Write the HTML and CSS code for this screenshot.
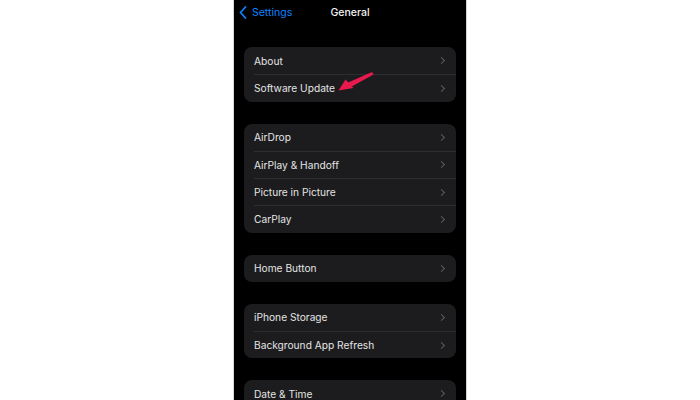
FILE: index.html
```html
<!DOCTYPE html>
<html>
<head>
    <title>General</title>
    <link rel="stylesheet" href="styles.css">
</head>
<body>
    <div class="screen">
        <div class="nav">
            <a class="back">
                <svg width="8" height="13" viewBox="0 0 8 13"><path d="M6.5 1 L1.5 6.5 L6.5 12" fill="none" stroke="#0a84ff" stroke-width="1.8" stroke-linecap="round" stroke-linejoin="round"/></svg>
                <span>Settings</span>
            </a>
            <div class="title">General</div>
            <div></div>
        </div>

        <div class="group">
            <div class="row"><div class="row-body"><span>About</span><i class="chev"></i></div></div>
            <div class="row"><div class="row-body"><span>Software Update</span><i class="chev"></i></div></div>
        </div>

        <div class="group">
            <div class="row"><div class="row-body"><span>AirDrop</span><i class="chev"></i></div></div>
            <div class="row"><div class="row-body"><span>AirPlay &amp; Handoff</span><i class="chev"></i></div></div>
            <div class="row"><div class="row-body"><span>Picture in Picture</span><i class="chev"></i></div></div>
            <div class="row"><div class="row-body"><span>CarPlay</span><i class="chev"></i></div></div>
        </div>

        <div class="group">
            <div class="row"><div class="row-body"><span>Home Button</span><i class="chev"></i></div></div>
        </div>

        <div class="group">
            <div class="row"><div class="row-body"><span>iPhone Storage</span><i class="chev"></i></div></div>
            <div class="row"><div class="row-body"><span>Background App Refresh</span><i class="chev"></i></div></div>
        </div>

        <div class="group">
            <div class="row"><div class="row-body"><span>Date &amp; Time</span><i class="chev"></i></div></div>
        </div>

        <!-- red pointer drawn over the Software Update row -->
        <svg class="pointer" width="40" height="24" viewBox="0 0 40 24">
            <polygon points="11,13 36,2 37.5,4.5 14,17.5" fill="#e8194d"/>
            <polygon points="2.5,20.5 9.5,9.5 17.5,18" fill="#e8194d"/>
        </svg>
    </div>
</body>
</html>
```

FILE: styles.css
```css
html, body { margin: 0; padding: 0; background: #fff; height: 400px; overflow: hidden; }
body { font-family: Inter, "Noto Sans", sans-serif; }
.screen { position: relative; width: 232px; height: 400px; margin: 0 auto; background: #000; border-left: 1px solid #d4d4d4; border-right: 1px solid #d4d4d4; }
.nav { height: 24px; display: grid; grid-template-columns: 1fr auto 1fr; align-items: center; }
.back { display: flex; align-items: center; gap: 5px; padding-left: 5px; color: #0a84ff; font-size: 10.5px; }
.title { color: #f2f2f2; font-size: 10.5px; font-weight: 500; }
.group { margin: 23px 10px 0; background: #1c1c1e; border-radius: 8px; overflow: hidden; }
.group + .group { margin-top: 22px; }
.row { padding-left: 10px; }
.row-body { box-sizing: border-box; height: 27.25px; display: flex; align-items: center; justify-content: space-between; padding-right: 11px; color: #e4e4e4; font-size: 10.2px; }
.row + .row .row-body { border-top: 1px solid #2e2e31; }
.chev { width: 4px; height: 4px; border-top: 1.3px solid #5c5c60; border-right: 1.3px solid #5c5c60; transform: rotate(45deg); margin-right: 1px; }
.pointer { position: absolute; top: 70px; left: 102px; }
```
